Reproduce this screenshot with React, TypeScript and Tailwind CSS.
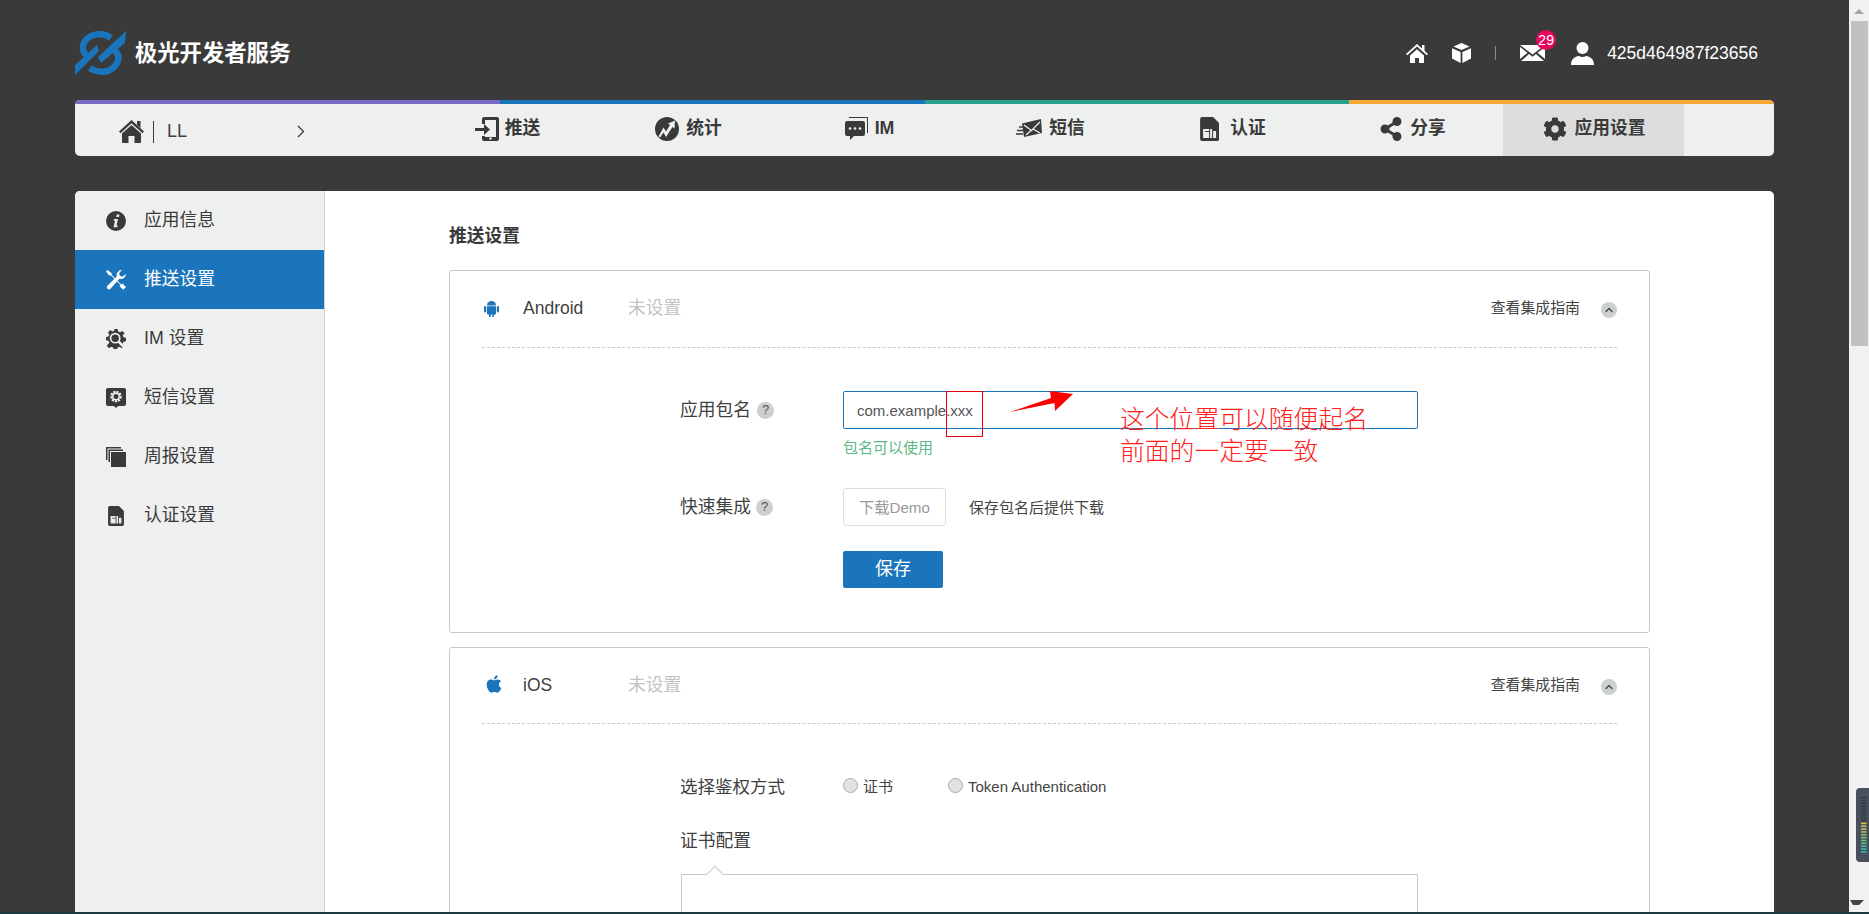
import { FaApple, FaCog, FaShareAlt } from 'react-icons/fa'
import { ChevronUp } from 'lucide-react'

const ink = '#3a3a3a'

function Logo() {
  return (
    <svg width="51" height="44" viewBox="0 0 51 44" fill="none">
      <path d="M36 7C28 1 15 2 9.500 11C6 17 8 21 12 25" stroke="#1a75bc" strokeWidth="6.500" />
      <path d="M15 37C23 43 37 42 42 32C45 26 43 22 39 19" stroke="#1a75bc" strokeWidth="6.500" />
      <path d="M0 44L0 34L22 14L24 20Z" fill="#1a75bc" />
      <path d="M51 0L50 12L26 32L23 26Z" fill="#1a75bc" />
    </svg>
  )
}

function SolidHome() {
  return (
    <svg width="25" height="23" viewBox="0 0 25 23" fill={ink}>
      <path d="M12.500 0L25 11.500l-1.500 1.700L12.500 3.200 1.500 13.200 0 11.500z" />
      <path d="M18 1h3.500v7L18 5z" />
      <path d="M12.500 5L22 13.500V22a1 1 0 0 1-1 1h-5.500v-7h-6v7H4a1 1 0 0 1-1-1v-8.500z" />
    </svg>
  )
}

function PushIcon() {
  return (
    <svg width="24" height="24" viewBox="0 0 24 24" fill={ink}>
      <path d="M9 0h13a2 2 0 0 1 2 2v20a2 2 0 0 1-2 2H9a2 2 0 0 1-2-2v-3h3v1h11V3H10v4H7V2a2 2 0 0 1 2-2z" />
      <path d="M0 11h9V7l6 5.500-6 5.500v-4H0z" />
      <circle cx="15.500" cy="21.500" r="1.200" fill="#eef0f0" />
    </svg>
  )
}

function StatIcon() {
  return (
    <svg width="24" height="24" viewBox="0 0 24 24">
      <circle cx="12" cy="12" r="12" fill={ink} />
      <path d="M3.500 19.500L8.500 10.500l2.500 4 4-6.500-2-1.500L20 3.500l-.5 8-2-1.500-6.500 10-2.500-4.500-3.500 5z" fill="#eef0f0" />
    </svg>
  )
}

function ChatIcon() {
  return (
    <svg width="23" height="24" viewBox="0 0 23 24" fill={ink}>
      <path d="M4 0h19v16h-1V1H4z" />
      <path d="M2 4h16a2 2 0 0 1 2 2v11a2 2 0 0 1-2 2H9l-4 4v-4H2a2 2 0 0 1-2-2V6a2 2 0 0 1 2-2z" />
      <circle cx="5" cy="11.500" r="1.300" fill="#eef0f0" />
      <circle cx="10" cy="11.500" r="1.300" fill="#eef0f0" />
      <circle cx="15" cy="11.500" r="1.300" fill="#eef0f0" />
    </svg>
  )
}

function SmsIcon() {
  return (
    <svg width="26" height="20" viewBox="0 0 26 20" fill={ink}>
      <path d="M6 4.500L25 0l1 14-18 4z" />
      <path d="M8 6l7.500 5.500L24 3M10 16l5-4.500M17 10l7 4" stroke="#eef0f0" strokeWidth="1.300" fill="none" />
      <path d="M3 8h5M1 11.500h6M0 15h7" stroke={ink} strokeWidth="1.300" />
    </svg>
  )
}

function SimIcon({ size = 24, bg = '#eef0f0' }: { size?: number; bg?: string }) {
  return (
    <svg width={size * 0.8} height={size} viewBox="0 0 19 24" fill={ink}>
      <path d="M2 0h11l6 6v16a2 2 0 0 1-2 2H2a2 2 0 0 1-2-2V2a2 2 0 0 1 2-2z" />
      <path d="M3 12h6v2H5v1h4v6H3zM10 12h2v9h-2zM13 14h3v7h-3z" fill={bg} />
    </svg>
  )
}

function HouseIcon() {
  return (
    <svg width="22" height="19" viewBox="0 0 22 19" fill="#fff">
      <path d="M11 0l5 4.500V1h2.500v5.800L22 10l-1.200 1.300L11 2.600 1.200 11.300 0 10z" />
      <path d="M4 11.500L11 5.200l7 6.300V19h-5v-5H9v5H4z" />
    </svg>
  )
}

function CubeIcon() {
  return (
    <svg width="19" height="20" viewBox="0 0 19 20" fill="#fff">
      <path d="M9.500 0l8 3.500-8 3.600-8-3.600z" />
      <path d="M0 5.200l8.600 3.800V20L0 15.500zM19 5.200L10.400 9V20l8.600-4.500z" />
    </svg>
  )
}

function MailIcon() {
  return (
    <svg width="25" height="16" viewBox="0 0 25 16" fill="#fff">
      <path d="M0 0h25L12.500 9.500z" />
      <path d="M0 2l7.500 5.700L0 14zM25 2l-7.500 5.700L25 14zM1 16l8-7 3.500 2.700L16 9l8 7z" />
    </svg>
  )
}

function PersonIcon() {
  return (
    <svg width="23" height="23" viewBox="0 0 23 23" fill="#fff">
      <circle cx="11.500" cy="6" r="6" />
      <path d="M0 23c0-5 3-8.500 8-9 2 1.300 5 1.300 7 0 5 .5 8 4 8 9z" />
    </svg>
  )
}

function InfoIcon() {
  return (
    <svg width="20" height="20" viewBox="0 0 20 20">
      <circle cx="10" cy="10" r="10" fill={ink} />
      <path d="M10.800 3.500h2.600l-.5 2.600h-2.600zM8 8h4l-1.500 6.500h1.200l-.4 1.800H7.500L9 9.800H7.700z" fill="#eef0f0" />
    </svg>
  )
}

function ToolsIcon() {
  return (
    <svg width="20" height="20" viewBox="0 0 20 20" fill="#fff">
      <path d="M1.500 0L5.500 3l.3 2 9.200 9.200 1.400-.8L20 17l-2.800 2.800-3.600-3.600.8-1.400L5 5.600 3 5.300 0 1.500z" />
      <path d="M20 4a5 5 0 0 1-6.600 4.800L4.500 18.800a2.200 2.200 0 0 1-3.100-3.100L10.800 6.400A5 5 0 0 1 16 .1L13.200 2.900l.7 3 3 .7z" />
    </svg>
  )
}

function ImGearIcon() {
  return (
    <svg width="20" height="20" viewBox="0 0 24 24" fill={ink}>
      <path d="M10 0h4l.6 3 2.400 1 2.600-1.700 2.800 2.800L20 7.600l1 2.400 3 .6v4l-3 .6-1 2.400 1.700 2.600-2.800 2.800-2.600-1.700-2.400 1-.6 3h-4l-.6-3-2.400-1-2.600 1.700-2.800-2.800L4 16.600l-1-2.400-3-.6v-4l3-.6 1-2.400L2.300 4.100l2.800-2.800L7.600 3l2.400-1z" />
      <circle cx="11" cy="11" r="5.500" fill={ink} stroke="#eef0f0" strokeWidth="2" />
      <path d="M15 15l6 6" stroke="#eef0f0" strokeWidth="3" />
    </svg>
  )
}

function BubbleGearIcon() {
  return (
    <svg width="20" height="20" viewBox="0 0 20 20" fill={ink}>
      <path d="M2 0h16a2 2 0 0 1 2 2v14a2 2 0 0 1-2 2h-6l-2 2-2-2H2a2 2 0 0 1-2-2V2a2 2 0 0 1 2-2z" />
      <circle cx="10" cy="8.500" r="4.500" fill="none" stroke="#eef0f0" strokeWidth="2.600" strokeDasharray="2 1" />
      <circle cx="10" cy="8.500" r="3.200" fill="none" stroke="#eef0f0" strokeWidth="1.400" />
    </svg>
  )
}

function PagesIcon() {
  return (
    <svg width="20" height="20" viewBox="0 0 20 20" fill={ink}>
      <path d="M0 0h15v1.500H1.500V13H0z" />
      <path d="M2.500 2.500H17V4H4v11H2.500z" />
      <path d="M5 5h15v15H5z" />
    </svg>
  )
}

function AndroidIcon() {
  return (
    <svg width="15" height="17" viewBox="0 0 15 17" fill="#1a75bc">
      <path d="M3 5.500a4.500 4.500 0 0 1 9 0z" />
      <path d="M3 6.200h9v7.300a1 1 0 0 1-1 1h-1V17H8.300v-2.500H6.700V17H5v-2.500H4a1 1 0 0 1-1-1z" />
      <rect x="0" y="6" width="2.200" height="6.500" rx="1.100" />
      <rect x="12.800" y="6" width="2.200" height="6.500" rx="1.100" />
    </svg>
  )
}

function Help() {
  return (
    <span className="flex h-[17px] w-[17px] items-center justify-center rounded-full bg-[#cdd0d0] text-[13px] text-[#555]">?</span>
  )
}

function CardHead({ icon, name, tall }: { icon: React.ReactNode; name: string; tall?: boolean }) {
  return (
    <div className={`flex items-center border-b border-dashed border-[#c8c8c8] pb-[1px] ${tall ? 'h-[77px]' : 'h-[76px]'}`}>
      <span className="flex w-[41px] pl-[2px] text-[#1a75bc]">{icon}</span>
      <span className="w-[105px] text-[17.500px] text-[#3f3f3f]">{name}</span>
      <span className="text-[17.750px] text-[#c4c4c4]">未设置</span>
      <span className="ml-auto text-[14.900px] text-[#444]">查看集成指南</span>
      <span className="ml-[21px] mt-[3px] flex h-[16px] w-[16px] items-center justify-center rounded-full bg-[#cdd0d0]">
        <ChevronUp className="h-3 w-3 text-[#444]" strokeWidth={2.500} />
      </span>
    </div>
  )
}

const navItems = [
  { icon: <PushIcon />, label: '推送', cls: 'gap-[6px]' },
  { icon: <StatIcon />, label: '统计', cls: 'gap-[7px]' },
  { icon: <ChatIcon />, label: 'IM', cls: 'gap-[7px]' },
  { icon: <SmsIcon />, label: '短信', cls: 'gap-[7px]' },
  { icon: <SimIcon />, label: '认证', cls: 'gap-[11px] pl-[3px]' },
  { icon: <FaShareAlt size={24} color={ink} />, label: '分享', cls: 'gap-[7px]' },
  { icon: <FaCog size={24} color={ink} />, label: '应用设置', cls: 'gap-[7px] pl-[2px] bg-[#dcdcdc]' },
]

const sideItems = [
  { icon: <InfoIcon />, label: '应用信息' },
  { icon: <ToolsIcon />, label: '推送设置', active: true },
  { icon: <ImGearIcon />, label: 'IM 设置' },
  { icon: <BubbleGearIcon />, label: '短信设置' },
  { icon: <PagesIcon />, label: '周报设置' },
  { icon: <span className="flex w-5 justify-center"><SimIcon size={20} /></span>, label: '认证设置' },
]

const meter = ['#343a46', '#343a46', '#343a46', '#343a46', '#343a46', '#343a46', '#343a46', '#343a46', '#343a46', '#d9c93a', '#cfc84a', '#bfc858', '#aac860', '#93c868', '#7cc870', '#65c878', '#50c888', '#40c898', '#30c8a8', '#20c8b8']

export default function App() {
  return (
    <div className="flex h-screen w-full flex-col overflow-hidden bg-[#3a3a3a] font-['Liberation_Sans','Noto_Sans_CJK_SC',sans-serif]">
      <div className="flex h-[912px] min-h-0">
        <div className="flex min-w-0 flex-1 flex-col px-[75px]">
          <header className="flex h-[100px] shrink-0 items-center pt-[6px]">
            <Logo />
            <span className="ml-[9px] mt-[2px] text-[22.300px] font-bold text-white">极光开发者服务</span>
            <div className="ml-auto flex items-center">
              <HouseIcon />
              <span className="ml-[24px]"><CubeIcon /></span>
              <span className="ml-[24px] h-[14px] w-px bg-[#8a8a8a]" />
              <span className="relative ml-[24px]">
                <MailIcon />
                <span className="absolute -top-[15px] left-[16px] flex h-[20px] w-[20px] items-center justify-center rounded-full bg-[#e5085e] text-[14px] text-white">29</span>
              </span>
              <span className="ml-[26px]"><PersonIcon /></span>
              <span className="ml-[13px] mr-[16px] text-[17.500px] text-white">425d464987f23656</span>
            </div>
          </header>

          <nav className="shrink-0 overflow-hidden rounded-[5px] bg-[#eef0f0]">
            <div className="grid h-[4px] grid-cols-4">
              <div className="bg-[#7b68c4]" />
              <div className="bg-[#1a75bc]" />
              <div className="bg-[#25a18e]" />
              <div className="bg-[#f6a935]" />
            </div>
            <div className="flex h-[52px]">
              <div className="flex w-[342px] items-center pl-[44px] pt-[3px] text-[#3a3a3a]">
                <SolidHome />
                <span className="ml-[9px] h-[22px] w-px bg-[#3a3a3a]" />
                <span className="ml-[13px] text-[18px] text-[#3f3f3f]">LL</span>
                <svg className="ml-[110px]" width="8" height="13" viewBox="0 0 8 13" fill="none" stroke={ink} strokeWidth="1.300"><path d="M1 1l5.500 5.500L1 12" /></svg>
              </div>
              {navItems.map((item) => (
                <div key={item.label} className={`flex w-[181px] items-center justify-center pb-[3px] ${item.cls}`}>
                  {item.icon}
                  <span className="text-[17.750px] font-bold text-[#3a3a3a]">{item.label}</span>
                </div>
              ))}
            </div>
          </nav>

          <div className="mt-[35px] flex min-h-0 flex-1 overflow-hidden rounded-t-[5px] bg-white">
            <aside className="w-[250px] shrink-0 border-r border-[#d5d5d5] bg-[#eef0f0]">
              {sideItems.map((item) => (
                <div key={item.label} className={`flex h-[59px] items-center gap-[18px] pl-[31px] ${item.active ? 'bg-[#1a75bc] text-white' : 'text-[#3a3a3a]'}`}>
                  {item.icon}
                  <span className="text-[17.750px]">{item.label}</span>
                </div>
              ))}
            </aside>

            <main className="min-w-0 flex-1 px-[124px]">
              <h2 className="mt-[33px] text-[17.750px] leading-[24px] font-bold text-[#3a3a3a]">推送设置</h2>

              <section className="mt-[22px] h-[363px] rounded-[3px] border border-[#c8c8c8] px-[32px]">
                <CardHead tall icon={<AndroidIcon />} name="Android" />
                <div className="pl-[198px] pt-[43px]">
                  <div className="flex">
                    <div className="flex h-[38px] w-[163px] items-center gap-[6px] text-[17.750px] text-[#3f3f3f]">
                      应用包名 <Help />
                    </div>
                    <div className="relative">
                      <div className="flex h-[38px] w-[575px] items-center rounded-[2px] border border-[#1a75bc] pl-[13px] pt-[3px] text-[15px] text-[#555]">com.example.xxx</div>
                      <div className="absolute left-[103px] top-0 h-[46px] w-[37px] border border-red-600" />
                      <svg className="absolute left-[167px] top-0" width="64" height="24" viewBox="0 0 64 24" fill="#ff0000">
                        <path d="M0 21L41 7L40 0L63 3L45 20L44.500 12Z" />
                      </svg>
                      <div className="absolute left-[277px] top-[13px] text-[24.800px] leading-[32px] font-light whitespace-nowrap text-[#ff2020]">
                        这个位置可以随便起名<br />前面的一定要一致
                      </div>
                      <div className="mt-[9px] text-[15px] leading-[20px] text-[#5cb985]">包名可以使用</div>
                    </div>
                  </div>
                  <div className="mt-[30px] flex">
                    <div className="flex h-[38px] w-[163px] items-center gap-[5px] text-[17.750px] text-[#3f3f3f]">
                      快速集成 <Help />
                    </div>
                    <div className="flex h-[38px] w-[103px] items-center justify-center rounded-[3px] border border-[#ddd] pt-[2px] text-[15.200px] text-[#999]">下载Demo</div>
                    <div className="ml-[23px] flex items-center pt-[2px] text-[15px] text-[#444]">保存包名后提供下载</div>
                  </div>
                  <div className="ml-[163px] mt-[25px] flex h-[37px] w-[100px] items-center justify-center rounded-[2px] bg-[#1a75bc] text-[18px] text-white">保存</div>
                </div>
              </section>

              <section className="mt-[14px] h-[500px] rounded-[3px] border border-[#c8c8c8] px-[32px]">
                <CardHead icon={<span className="-mt-[3px]"><FaApple size={20} /></span>} name="iOS" />
                <div className="pl-[198px] pt-[53px]">
                  <div className="flex h-[20px] items-center">
                    <span className="w-[163px] text-[17.500px] text-[#3f3f3f]">选择鉴权方式</span>
                    <span className="-mt-[3px] h-[15px] w-[15px] rounded-full border border-[#aaa] bg-[#e2e2e2]" />
                    <span className="ml-[5px] w-[85px] pt-[1px] text-[15px] text-[#444]">证书</span>
                    <span className="-mt-[3px] h-[15px] w-[15px] rounded-full border border-[#aaa] bg-[#e2e2e2]" />
                    <span className="ml-[5px] pt-[1px] text-[15px] text-[#444]">Token Authentication</span>
                  </div>
                  <div className="mt-[34px] text-[17.750px] leading-[20px] text-[#3f3f3f]">证书配置</div>
                  <div className="relative ml-[1px] mt-[23px] h-[200px] w-[737px] border border-[#c8c8c8]">
                    <span className="absolute left-[27px] -top-[7px] h-[12px] w-[12px] rotate-45 border-l border-t border-[#c8c8c8] bg-white" />
                    <div className="ml-[200px] mt-[38px] h-[40px] w-[91px] rounded-[3px] border border-[#ccc]" />
                  </div>
                </div>
              </section>
            </main>
          </div>
        </div>

        <div className="relative flex w-[20px] shrink-0 flex-col items-end bg-[#f1f1f1]">
          <svg className="absolute left-[5px] top-[9px]" width="10" height="5" viewBox="0 0 10 5" fill="#a3a3a3"><path d="M5 0l5 5H0z" /></svg>
          <div className="mr-px mt-[21px] h-[325px] w-[17px] bg-[#c1c1c1]" />
          <svg className="absolute left-[1px] top-[900px]" width="14" height="5" viewBox="0 0 14 5" fill="#444"><path d="M0 0h14l-5 5H3z" /></svg>
          <svg className="absolute right-0 top-[788px]" width="13" height="74" viewBox="0 0 13 74">
            <path d="M13 0H4a4 4 0 0 0-4 4v66a4 4 0 0 0 4 4h9z" fill="#4a4f5e" />
            {meter.map((c, i) => (
              <rect key={i} x="5" y={9 + i * 2.85} width="5.500" height="1.500" fill={c} />
            ))}
          </svg>
        </div>
      </div>
      <div className="h-[2px] shrink-0 bg-[#1e3a3f]" />
    </div>
  )
}
